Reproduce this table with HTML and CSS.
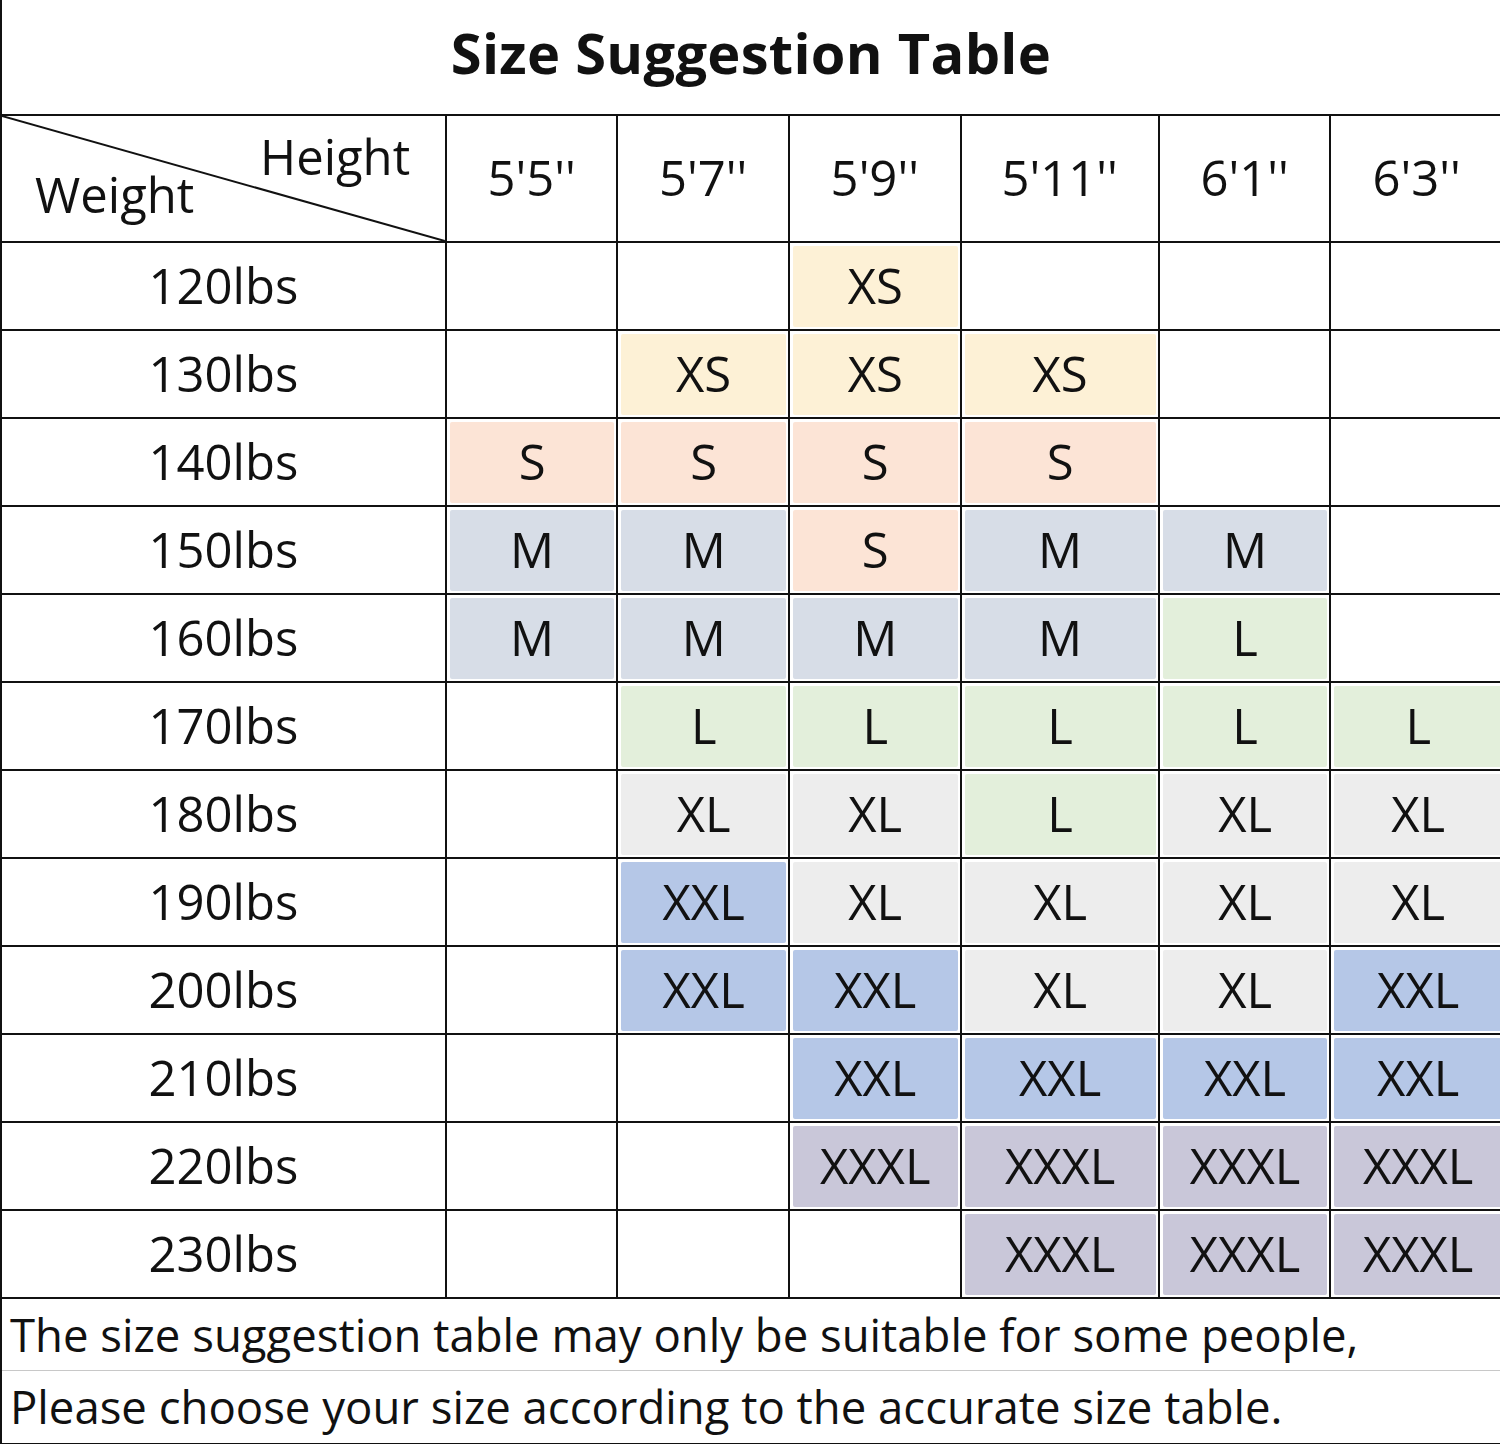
FILE: index.html
```html
<!DOCTYPE html>
<html lang="en">
<head>
<meta charset="utf-8">
<title>Size Suggestion Table</title>
<link rel="stylesheet" href="styles.css">
</head>
<body>
<div class="sheet">
  <div class="title">Size Suggestion Table</div>
  <table class="grid">
    <colgroup>
      <col class="c-label">
      <col class="c-std">
      <col class="c-std">
      <col class="c-std">
      <col class="c-wide">
      <col class="c-std">
      <col class="c-std">
    </colgroup>
    <thead>
      <tr class="head-row">
        <th class="corner">
          <svg class="diag" viewBox="0 0 445 126" preserveAspectRatio="none"><line x1="0" y1="0" x2="445" y2="126" stroke="#111" stroke-width="2"/></svg>
          <span class="lbl-height">Height</span>
          <span class="lbl-weight">Weight</span>
        </th>
        <th>5'5''</th>
        <th>5'7''</th>
        <th>5'9''</th>
        <th>5'11''</th>
        <th>6'1''</th>
        <th>6'3''</th>
      </tr>
    </thead>
    <tbody>
      <tr class="r88"><th>120lbs</th><td></td><td></td><td><div class="fill xs">XS</div></td><td></td><td></td><td></td></tr>
      <tr class="r88"><th>130lbs</th><td></td><td><div class="fill xs">XS</div></td><td><div class="fill xs">XS</div></td><td><div class="fill xs">XS</div></td><td></td><td></td></tr>
      <tr class="r88"><th>140lbs</th><td><div class="fill s">S</div></td><td><div class="fill s">S</div></td><td><div class="fill s">S</div></td><td><div class="fill s">S</div></td><td></td><td></td></tr>
      <tr class="r88"><th>150lbs</th><td><div class="fill m">M</div></td><td><div class="fill m">M</div></td><td><div class="fill s">S</div></td><td><div class="fill m">M</div></td><td><div class="fill m">M</div></td><td></td></tr>
      <tr class="r88"><th>160lbs</th><td><div class="fill m">M</div></td><td><div class="fill m">M</div></td><td><div class="fill m">M</div></td><td><div class="fill m">M</div></td><td><div class="fill l">L</div></td><td></td></tr>
      <tr class="r87"><th>170lbs</th><td></td><td><div class="fill l">L</div></td><td><div class="fill l">L</div></td><td><div class="fill l">L</div></td><td><div class="fill l">L</div></td><td><div class="fill l">L</div></td></tr>
      <tr class="r88"><th>180lbs</th><td></td><td><div class="fill xl">XL</div></td><td><div class="fill xl">XL</div></td><td><div class="fill l">L</div></td><td><div class="fill xl">XL</div></td><td><div class="fill xl">XL</div></td></tr>
      <tr class="r88"><th>190lbs</th><td></td><td><div class="fill xxl">XXL</div></td><td><div class="fill xl">XL</div></td><td><div class="fill xl">XL</div></td><td><div class="fill xl">XL</div></td><td><div class="fill xl">XL</div></td></tr>
      <tr class="r88"><th>200lbs</th><td></td><td><div class="fill xxl">XXL</div></td><td><div class="fill xxl">XXL</div></td><td><div class="fill xl">XL</div></td><td><div class="fill xl">XL</div></td><td><div class="fill xxl">XXL</div></td></tr>
      <tr class="r87"><th>210lbs</th><td></td><td></td><td><div class="fill xxl">XXL</div></td><td><div class="fill xxl">XXL</div></td><td><div class="fill xxl">XXL</div></td><td><div class="fill xxl">XXL</div></td></tr>
      <tr class="r88"><th>220lbs</th><td></td><td></td><td><div class="fill xxxl">XXXL</div></td><td><div class="fill xxxl">XXXL</div></td><td><div class="fill xxxl">XXXL</div></td><td><div class="fill xxxl">XXXL</div></td></tr>
      <tr class="r88"><th>230lbs</th><td></td><td></td><td></td><td><div class="fill xxxl">XXXL</div></td><td><div class="fill xxxl">XXXL</div></td><td><div class="fill xxxl">XXXL</div></td></tr>
    </tbody>
  </table>
  <div class="notes">
    <p class="note first">The size suggestion table may only be suitable for some people,</p>
    <p class="note">Please choose your size according to the accurate size table.</p>
  </div>
</div>
</body>
</html>
```
FILE: styles.css
```css
html, body {
  margin: 0;
  padding: 0;
  background: #ffffff;
  overflow: hidden;
}
body {
  width: 1500px;
  height: 1444px;
  font-family: "Open Sans", "Noto Sans", "DejaVu Sans", sans-serif;
  color: #111;
}
.sheet {
  width: 1500px;
  border-left: 2px solid #111;
  box-sizing: border-box;
}
.title {
  height: 114px;
  display: flex;
  align-items: center;
  justify-content: center;
  width: 1498px;
  font-weight: 700;
  font-size: 56px;
  letter-spacing: 0.3px;
  padding-bottom: 10px;
  box-sizing: border-box;
}
.grid {
  border-collapse: collapse;
  table-layout: fixed;
  width: 1500px;
}
.c-label { width: 441px; }
.c-std { width: 170.5px; }
.c-wide { width: 197px; }
.grid th, .grid td {
  border: 2px solid #111;
  padding: 0 0 3px 0;
  text-align: center;
  vertical-align: middle;
  font-weight: 400;
  font-size: 49px;
}
.grid tr > :first-child { border-left: none; }
.grid tr > :last-child { border-right: none; }
.head-row { height: 127px; }
.r88 { height: 88px; }
.r87 { height: 87px; }
.grid td { padding: 3px 2px 2px 3px; }
.grid td:last-child { padding-right: 0; }
.fill {
  height: 100%;
  min-height: 81px;
  padding-bottom: 4px;
  display: flex;
  align-items: center;
  justify-content: center;
  border-radius: 2px;
  box-sizing: border-box;
}
.xs { background: #fdf1d6; }
.s { background: #fce4d6; }
.m { background: #d7dde7; }
.l { background: #e3efdb; }
.xl { background: #ededed; }
.xxl { background: #b5c7e7; }
.xxxl { background: #c9c7d9; }
.corner {
  position: relative;
  overflow: hidden;
}
.diag {
  position: absolute;
  left: 0;
  top: 0;
  width: 100%;
  height: 100%;
}
.lbl-height, .lbl-weight { font-size: 49px; line-height: 1; }
.lbl-height {
  position: absolute;
  left: 258px;
  top: 16px;
}
.lbl-weight {
  position: absolute;
  left: 33px;
  top: 54px;
}
.notes {
  width: 1500px;
  border-bottom: 2px solid #111;
}
.note {
  margin: 0;
  height: 72px;
  line-height: 70px;
  padding-left: 8px;
  font-size: 45.5px;
  white-space: nowrap;
  box-sizing: border-box;
}
.note.first {
  border-bottom: 1px solid #c8c8c8;
}
```
